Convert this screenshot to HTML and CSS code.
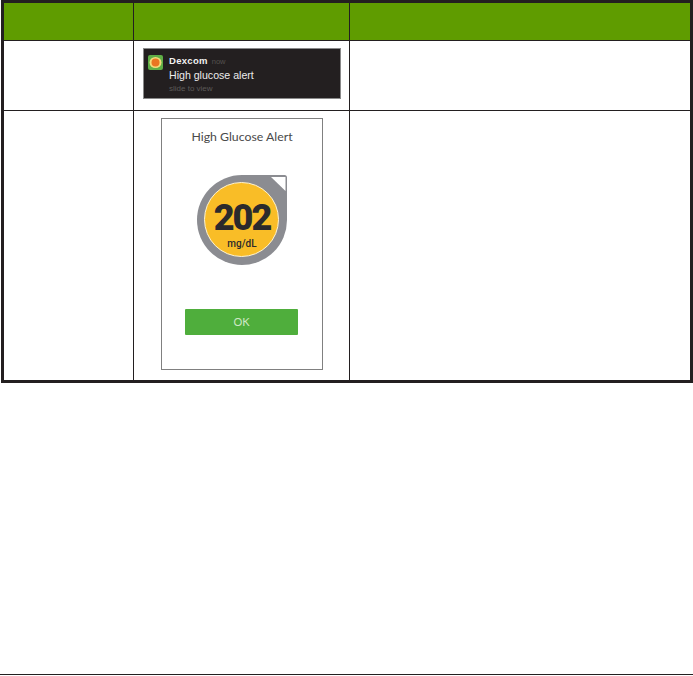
FILE: index.html
```html
<!DOCTYPE html>
<html lang="en">
<head>
<meta charset="utf-8">
<title>High glucose alert</title>
<link rel="stylesheet" href="styles.css">
</head>
<body>
<div class="page">
  <div class="table">
    <div class="cell head"></div>
    <div class="cell head"></div>
    <div class="cell head last"></div>

    <div class="cell row-a"></div>
    <div class="cell row-a notif-cell">
      <div class="notif">
        <svg class="app-icon" viewBox="0 0 15 15" aria-hidden="true">
          <rect width="15" height="15" rx="2" fill="#5fae46"/>
          <ellipse cx="7.5" cy="7.5" rx="6" ry="5.6" fill="#f3dc7a"/>
          <circle cx="7.5" cy="7.5" r="4" fill="#ea7622"/>
        </svg>
        <div class="notif-text">
          <div class="notif-top"><span class="app-name">Dexcom</span><span class="now">now</span></div>
          <div class="notif-msg">High glucose alert</div>
          <div class="notif-hint">slide to view</div>
        </div>
      </div>
    </div>
    <div class="cell row-a last"></div>

    <div class="cell row-b"></div>
    <div class="cell row-b phone-cell">
      <div class="phone">
        <div class="phone-title">High Glucose Alert</div>
        <div class="gauge">
          <svg class="gauge-shape" viewBox="0 0 92 92" aria-hidden="true">
            <path d="M46 1H88.500Q91 1 91 3.500V46A45 45 0 1 1 46 1Z" fill="#8b8c91"/>
            <path d="M75 3H89.500V17Z" fill="#fff"/>
            <circle cx="45.500" cy="45.500" r="37" fill="#f9bd27" stroke="#fff3cf" stroke-width="1"/>
          </svg>
          <div class="reading">
            <span class="value">202</span>
            <span class="unit">mg/dL</span>
          </div>
        </div>
        <div class="ok">OK</div>
      </div>
    </div>
    <div class="cell row-b last"></div>
  </div>
  <div class="footer-rule"></div>
</div>
</body>
</html>
```
FILE: styles.css
```css
* { box-sizing: border-box; }

html, body {
  margin: 0;
  padding: 0;
  background: #fff;
}

.page {
  width: 693px;
  height: 676px;
  display: flex;
  flex-direction: column;
  font-family: "Liberation Sans", Arial, sans-serif;
}

.table {
  margin-left: 1px;
  width: 692px;
  height: 383px;
  border: 3px solid #231f20;
  display: grid;
  grid-template-columns: 130px 216px 1fr;
  grid-template-rows: 38px 70px 1fr;
  background: #fff;
}

.cell {
  border-right: 1px solid #231f20;
  border-bottom: 1px solid #231f20;
  min-width: 0;
}

.cell.last { border-right: 0; }
.row-b { border-bottom: 0; }
.head { background: #5f9c00; }

.notif-cell {
  padding: 7px 8px 0 9px;
}

.notif {
  width: 198px;
  height: 51px;
  background: #231f20;
  border: 1px solid #8a8a8a;
  display: flex;
  padding: 6px 0 0 4px;
  gap: 6px;
}

.app-icon {
  width: 15px;
  height: 15px;
  flex: none;
}

.notif-text {
  display: flex;
  flex-direction: column;
}

.notif-top {
  display: flex;
  align-items: baseline;
  gap: 4px;
  height: 12px;
  line-height: 12px;
}

.app-name {
  color: #f2f2f2;
  font-size: 9.500px;
  font-weight: 700;
  letter-spacing: 0.3px;
}

.now {
  color: #55524f;
  font-size: 7.500px;
}

.notif-msg {
  color: #ececec;
  font-size: 10.600px;
  line-height: 14px;
  margin-top: 1px;
}

.notif-hint {
  color: #5c5a58;
  font-size: 8px;
  line-height: 10px;
  margin-top: 2px;
}

.phone-cell {
  padding: 7px 0 0 27px;
}

.phone {
  width: 162px;
  height: 252px;
  border: 1px solid #808080;
  display: flex;
  flex-direction: column;
  align-items: center;
}

.phone-title {
  margin-top: 10px;
  height: 15px;
  line-height: 15px;
  font-family: Lato, "Liberation Sans", sans-serif;
  font-size: 12.300px;
  color: #4a4a4a;
}

.gauge {
  position: relative;
  margin-top: 30px;
  width: 92px;
  height: 92px;
}

.gauge-shape {
  display: block;
  width: 92px;
  height: 92px;
}

.reading {
  position: absolute;
  inset: 0;
  display: flex;
  flex-direction: column;
  align-items: center;
  color: #2b2a2c;
}

.value {
  margin-top: 30px;
  font-family: Roboto, "Liberation Sans", sans-serif;
  font-size: 36px;
  line-height: 28px;
  font-weight: 900;
  letter-spacing: -2px;
}

.unit {
  margin-top: 6px;
  font-family: Roboto, "Liberation Sans", sans-serif;
  font-size: 10px;
  line-height: 11px;
  font-weight: 500;
}

.ok {
  margin-top: 43px;
  margin-right: 1px;
  width: 113px;
  height: 26px;
  background: #4fae3c;
  border-radius: 1px;
  color: #cfe8c4;
  font-family: Lato, "Liberation Sans", sans-serif;
  font-size: 11px;
  line-height: 26px;
  text-align: center;
}

.footer-rule {
  margin-top: auto;
  margin-bottom: 1px;
  height: 1px;
  background: #231f20;
}
```
